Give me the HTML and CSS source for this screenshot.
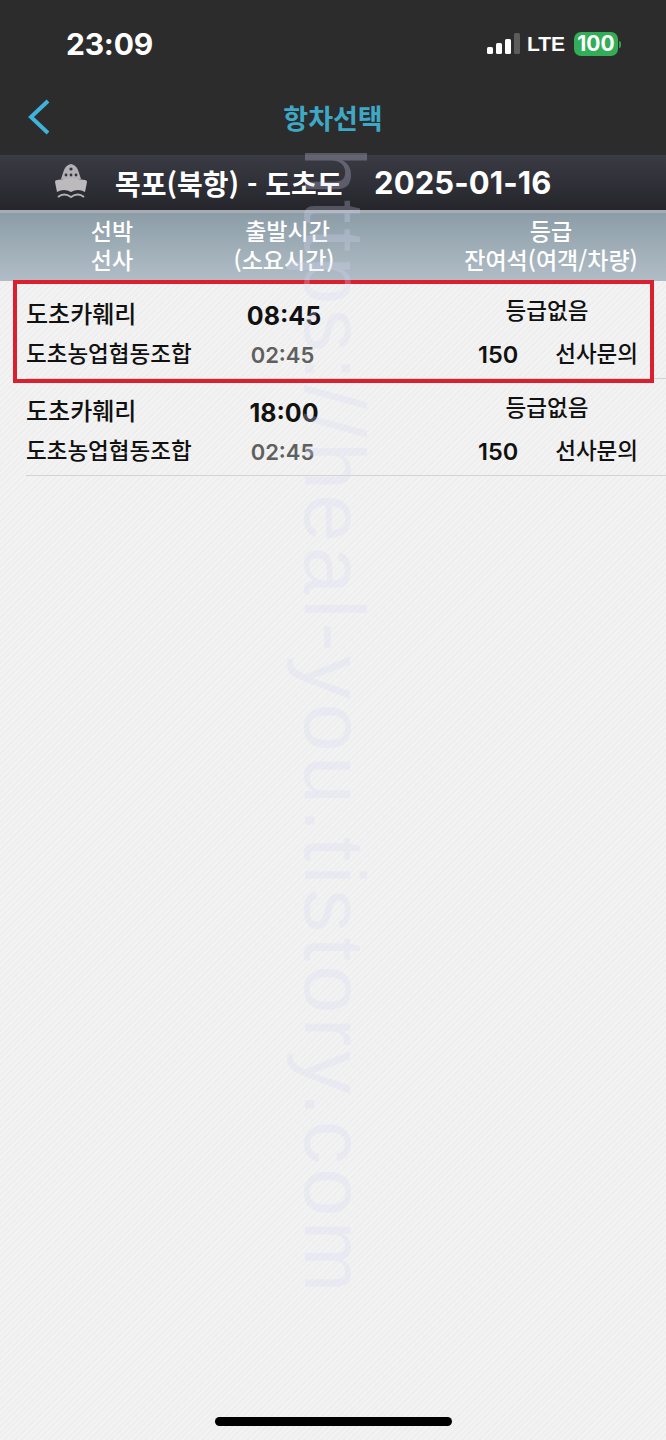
FILE: index.html
```html
<!DOCTYPE html>
<html lang="ko">
<head>
<meta charset="utf-8">
<title>항차선택</title>
<link rel="stylesheet" href="styles.css">
</head>
<body>
<div class="screen">
  <header class="top">
    <div class="status">
      <span class="clock">23:09</span>
      <div class="indicators">
        <svg class="signal" width="33" height="22" viewBox="0 0 33 22" aria-hidden="true">
          <rect x="0" y="14" width="6" height="7" rx="1.5" fill="#fff"/>
          <rect x="9" y="10" width="6" height="11" rx="1.5" fill="#fff"/>
          <rect x="18" y="6" width="6" height="15" rx="1.5" fill="#fff"/>
          <rect x="27" y="0" width="6" height="21" rx="1.5" fill="#5c5c5c"/>
        </svg>
        <span class="lte">LTE</span>
        <span class="battery">100</span>
        <span class="nub"></span>
      </div>
    </div>
    <nav class="nav">
      <svg class="back" width="26" height="38" viewBox="0 0 26 38" aria-hidden="true">
        <path d="M22 3 L5 19 L22 35" fill="none" stroke="#3fb3dc" stroke-width="4"/>
      </svg>
      <h1 class="title">항차선택</h1>
    </nav>
  </header>

  <div class="route">
    <svg class="ship" width="34" height="37" viewBox="0 0 34 37" aria-hidden="true">
      <path d="M17 0 Q22 1 24 6 L27 15 H7 L10 6 Q12 1 17 0 Z" fill="#b3b1b6"/>
      <circle cx="17" cy="5" r="1.6" fill="#34343c"/>
      <circle cx="12" cy="11" r="1.4" fill="#34343c"/>
      <circle cx="17" cy="11" r="1.4" fill="#34343c"/>
      <circle cx="22" cy="11" r="1.4" fill="#34343c"/>
      <path d="M1 18 Q1 16 3 16 L17 14 L31 16 Q33 16 33 18 L31 28 Q24 24 17 28 Q10 24 3 28 Z" fill="#bcbabd"/>
      <path d="M4 33 Q10 28 17 33 Q24 28 30 33" fill="none" stroke="#b3b1b6" stroke-width="2"/>
    </svg>
    <span class="route-name">목포(북항) - 도초도</span>
    <span class="route-date">2025-01-16</span>
  </div>

  <div class="thead">
    <div class="tcol"><div>선박</div><div>선사</div></div>
    <div class="tcol"><div class="tcol-shift">출발시간</div><div>(소요시간)</div></div>
    <div class="tcol tcol-right"><div>등급</div><div>잔여석(여객/차량)</div></div>
  </div>

  <main class="list">
    <article class="row">
      <div class="ship-name">도초카훼리</div>
      <div class="depart">08:45</div>
      <div class="grade">등급없음</div>
      <div class="company">도초농업협동조합</div>
      <div class="duration">02:45</div>
      <div class="seats"><span class="num">150</span><span class="inquiry">선사문의</span></div>
    </article>
    <article class="row">
      <div class="ship-name">도초카훼리</div>
      <div class="depart">18:00</div>
      <div class="grade">등급없음</div>
      <div class="company">도초농업협동조합</div>
      <div class="duration">02:45</div>
      <div class="seats"><span class="num">150</span><span class="inquiry">선사문의</span></div>
    </article>
    <div class="highlight"></div>
  </main>

  <div class="home-bar"></div>
  <div class="watermark">https://heal-you.tistory.com</div>
</div>
</body>
</html>
```
FILE: styles.css
```css
* { box-sizing: border-box; }
html, body { margin: 0; padding: 0; }
body { font-family: "Noto Sans CJK KR", "Liberation Sans", sans-serif; }

.screen {
  position: relative;
  width: 666px;
  height: 1440px;
  overflow: hidden;
  display: flex;
  flex-direction: column;
  background-color: #f3f3f3;
  background-image: repeating-linear-gradient(135deg, rgba(0,0,0,.018) 0 2px, transparent 2px 4px);
}

.top { height: 155px; background: #2c2c2c; flex: none; }

.status {
  height: 88px;
  padding: 0 45px 0 66px;
  display: flex;
  align-items: center;
  justify-content: space-between;
}
.clock {
  font-family: Inter, "Liberation Sans", sans-serif;
  font-weight: 700;
  font-size: 30px;
  letter-spacing: -.2px;
  color: #fff;
}
.indicators { display: flex; align-items: center; }
.signal { margin-right: 7px; }
.lte {
  font-family: "Liberation Sans", sans-serif;
  font-weight: 700;
  font-size: 21px;
  width: 37px;
  color: #fff;
  margin-right: 10px;
}
.battery {
  width: 44px;
  height: 24px;
  border-radius: 7px;
  background: #33ad58;
  color: #fff;
  font-family: Inter, "Liberation Sans", sans-serif;
  font-weight: 700;
  font-size: 21px;
  line-height: 24px;
  text-align: center;
}
.nub { width: 2px; height: 7px; margin-left: 1px; background: #2f9e50; border-radius: 0 2px 2px 0; }

.nav {
  height: 67px;
  position: relative;
  display: flex;
  align-items: center;
  justify-content: center;
}
.back { position: absolute; left: 26px; top: 10px; }
.title {
  margin: 0 0 9px;
  font-size: 27px;
  font-weight: 700;
  color: #3fa8c6;
}

.route {
  height: 55px;
  flex: none;
  display: flex;
  align-items: center;
  padding: 0 0 0 54px;
  color: #fff;
  background: linear-gradient(#3b3b45, #25252b);
}
.ship { margin-right: 27px; }
.route-name { font-size: 28px; font-weight: 700; width: 259px; white-space: nowrap; }
.route-date {
  font-family: Inter, "Liberation Sans", sans-serif;
  font-weight: 700;
  font-size: 31px;
  letter-spacing: .1px;
}

.thead {
  height: 71px;
  flex: none;
  display: grid;
  grid-template-columns: 224px 120px 322px;
  align-items: center;
  color: #fff;
  font-size: 23px;
  font-weight: 500;
  line-height: 29px;
  text-align: center;
  background: linear-gradient(#8c9da7, #b1bdc6);
  border-top: 3px solid #a5adb3;
}
.tcol { white-space: nowrap; margin-bottom: 5px; }
.tcol-shift { padding-left: 7px; }
.tcol-right { padding-left: 92px; }

.list { position: relative; flex: none; }
.row {
  display: grid;
  grid-template-columns: 198px 120px 322px;
  grid-auto-rows: 39px;
  align-items: center;
  margin-left: 26px;
  padding: 14px 0 3px;
  height: 97px;
  border-bottom: 1px solid #d3d3d3;
  color: #111;
  font-size: 22.5px;
  font-weight: 500;
}
.row:first-of-type { height: 98px; padding-top: 15px; }
.ship-name, .company, .inquiry { white-space: nowrap; padding-bottom: 6px; }
.ship-name { font-size: 24px; }
.depart, .duration, .num { font-family: Inter, "Liberation Sans", sans-serif; text-align: center; }
.depart { font-weight: 700; font-size: 25px; }
.duration { font-weight: 600; font-size: 22px; padding-right: 3px; color: #5f5f5f; }
.grade { padding: 0 6px 12px 90px; text-align: center; line-height: 31px; }
.seats { display: flex; align-items: center; justify-content: flex-end; gap: 37px; padding-right: 28px; }
.num { font-weight: 600; font-size: 23.5px; }

.highlight {
  position: absolute;
  left: 13px;
  top: -1px;
  width: 641px;
  height: 103px;
  border: 4px solid #dc1f2e;
}

.home-bar {
  position: absolute;
  left: 215px;
  top: 1417px;
  width: 237px;
  height: 9px;
  border-radius: 5px;
  background: #000;
}

.watermark {
  position: absolute;
  left: 285px;
  top: 147px;
  writing-mode: vertical-rl;
  font-family: "Liberation Sans", sans-serif;
  font-size: 86px;
  letter-spacing: 4.6px;
  line-height: 100px;
  white-space: nowrap;
  color: rgba(215, 215, 245, .27);
  pointer-events: none;
}
```
